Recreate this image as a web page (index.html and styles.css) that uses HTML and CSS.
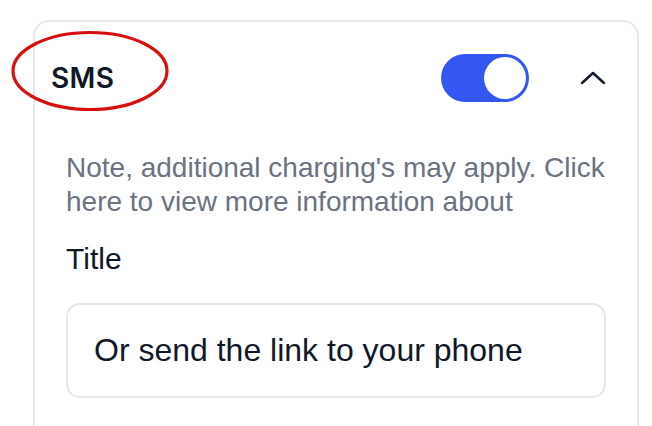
FILE: index.html
```html
<!DOCTYPE html>
<html lang="en">
<head>
    <meta charset="UTF-8">
    <meta name="viewport" content="width=device-width, initial-scale=1.0">
    <title>SMS settings</title>
    <link rel="stylesheet" href="styles.css">
</head>
<body>
    <div class="panel">
        <!-- Channel header with switch and collapse arrow -->
        <div class="panel-head">
            <h2 class="panel-title">SMS</h2>
            <label class="switch">
                <input type="checkbox" checked>
                <span class="slider"></span>
            </label>
            <button class="collapse" aria-label="Collapse">
                <svg width="26" height="16" viewBox="0 0 26 16">
                    <path d="M2 13 L13 3 L24 13" fill="none" stroke="#111827" stroke-width="2.5" stroke-linecap="round" stroke-linejoin="round"/>
                </svg>
            </button>
            <svg class="mark" width="164" height="86" viewBox="0 0 164 86">
                <ellipse cx="80" cy="43" rx="77" ry="38.5" fill="none" stroke="#d70f0f" stroke-width="3.2"/>
            </svg>
        </div>

        <div class="panel-body">
            <p class="note">Note, additional charging's may apply. Click here to view more information about</p>
            <label class="field-label" for="smsTitle">Title</label>
            <input class="field" id="smsTitle" type="text" value="Or send the link to your phone">
        </div>
    </div>
</body>
</html>
```

FILE: styles.css
```css
body {
    margin: 0;
    padding: 20px 13px 0 33px;
    background: #fff;
    font-family: "Liberation Sans", Arial, sans-serif;
    color: #111827;
    overflow: hidden;
    height: 426px;
    box-sizing: border-box;
}
.panel {
    border: 2px solid #e5e7eb;
    border-radius: 16px;
    height: 440px;
    box-sizing: border-box;
}
.panel-head {
    position: relative;
    display: flex;
    align-items: center;
    padding: 32px 31px 0 16px;
}
.panel-title {
    margin: 0;
    flex: 1;
    font-family: Inter, sans-serif;
    font-weight: 600;
    font-size: 28px;
    letter-spacing: 0.3px;
    line-height: 48px;
}
.switch {
    position: relative;
    width: 88px;
    height: 48px;
    margin-right: 51px;
}
.switch input {
    display: none;
}
.slider {
    position: absolute;
    inset: 0;
    background: #3457f4;
    border-radius: 24px;
}
.slider::after {
    content: "";
    position: absolute;
    top: 3px;
    right: 3px;
    width: 42px;
    height: 42px;
    border-radius: 50%;
    background: #fff;
}
.collapse {
    border: none;
    background: none;
    padding: 0;
    width: 26px;
    height: 16px;
    display: flex;
}
.mark {
    position: absolute;
    left: -25px;
    top: 6px;
}
.panel-body {
    padding: 49px 31px 0 31px;
}
.note {
    margin: 0 -10px 0 0;
    color: #6b7280;
    font-size: 28px;
    line-height: 34px;
}
.field-label {
    display: block;
    margin-top: 23px;
    font-size: 30px;
    line-height: 34px;
}
.field {
    display: block;
    box-sizing: border-box;
    width: 100%;
    height: 95px;
    margin-top: 27px;
    padding: 0 26px;
    border: 2px solid #e5e7eb;
    border-radius: 14px;
    font-family: "Liberation Sans", Arial, sans-serif;
    font-size: 32px;
    color: #111827;
    background: #fff;
    outline: none;
}
```
